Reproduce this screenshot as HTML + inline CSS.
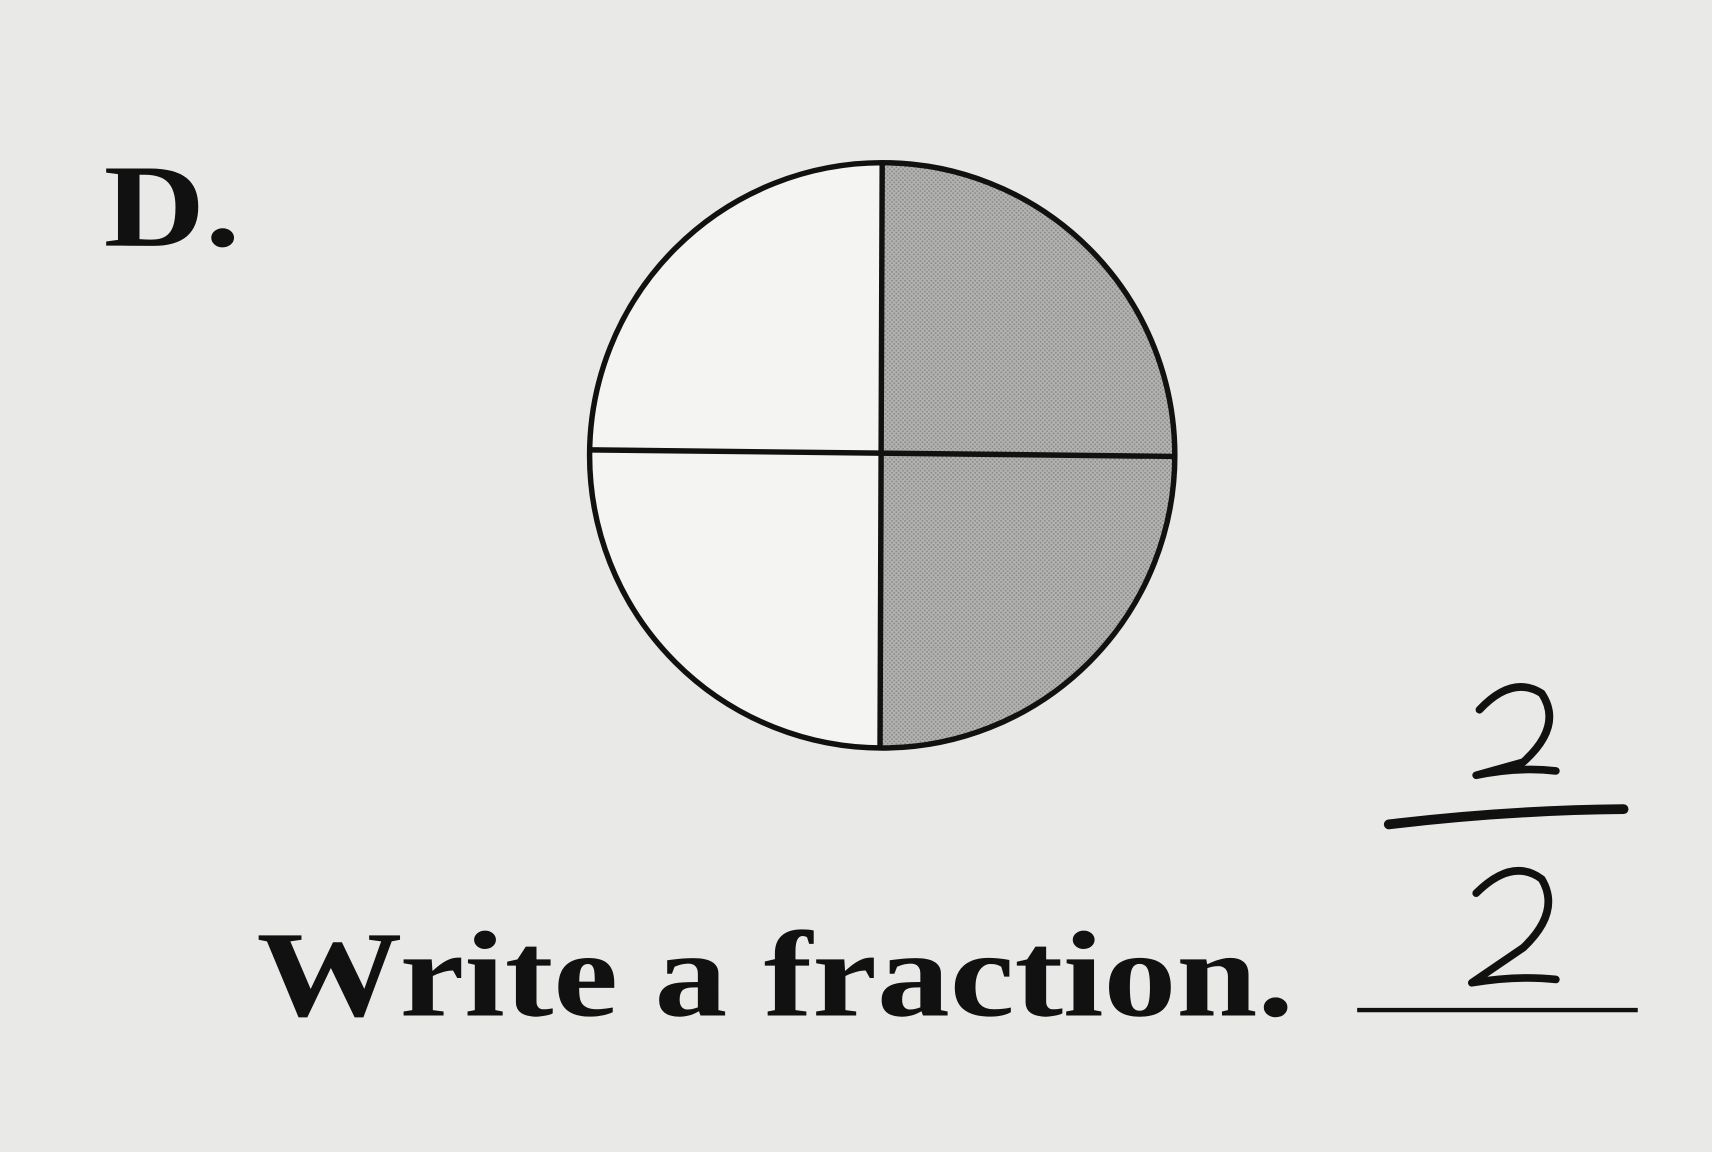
<!DOCTYPE html>
<html><head><meta charset="utf-8"><style>
html,body{margin:0;padding:0;width:1712px;height:1152px;overflow:hidden;background:#e9e9e7;}
svg{display:block}
</style></head><body>
<svg width="1712" height="1152" viewBox="0 0 1568 1055" preserveAspectRatio="none" xmlns="http://www.w3.org/2000/svg">
<defs>
<pattern id="dots" width="4" height="4" patternUnits="userSpaceOnUse">
<rect width="4" height="4" fill="#b4b4b2"/>
<circle cx="1" cy="1" r="0.9" fill="#8a8a88"/>
<circle cx="3" cy="3" r="0.9" fill="#8a8a88"/>
</pattern>
</defs>
<rect width="1568" height="1055" fill="#e9e9e7"/>
<text x="95" y="225" font-family="Liberation Serif, serif" font-size="108" font-weight="bold" fill="#111" textLength="125" lengthAdjust="spacingAndGlyphs">D.</text>
<circle cx="808" cy="417" r="268" fill="#f4f4f2"/>
<path d="M808 417 L808 149 A268 268 0 0 1 808 685 Z" fill="url(#dots)"/>
<circle cx="808" cy="417" r="268" fill="none" stroke="#111" stroke-width="5"/>
<line x1="808" y1="149" x2="806" y2="686" stroke="#111" stroke-width="5"/>
<line x1="540" y1="412" x2="1076" y2="418" stroke="#111" stroke-width="5"/>
<text x="235" y="930" font-family="Liberation Serif, serif" font-size="112" font-weight="bold" fill="#111" textLength="950" lengthAdjust="spacingAndGlyphs">Write a fraction.</text>
<line x1="1243" y1="925" x2="1500" y2="925" stroke="#111" stroke-width="4"/>
<path d="M1272 755 Q1380 742 1487 741" fill="none" stroke="#111" stroke-width="9" stroke-linecap="round"/>
<path d="M1355 650 Q1385 618 1412 635 Q1432 665 1395 698 L1352 710 Q1390 702 1425 706" fill="none" stroke="#111" stroke-width="7" stroke-linecap="round" stroke-linejoin="round"/>
<path d="M1352 818 Q1385 785 1412 805 Q1430 835 1395 868 L1348 900 Q1390 893 1425 897" fill="none" stroke="#111" stroke-width="7" stroke-linecap="round" stroke-linejoin="round"/>
</svg>
</body></html>
